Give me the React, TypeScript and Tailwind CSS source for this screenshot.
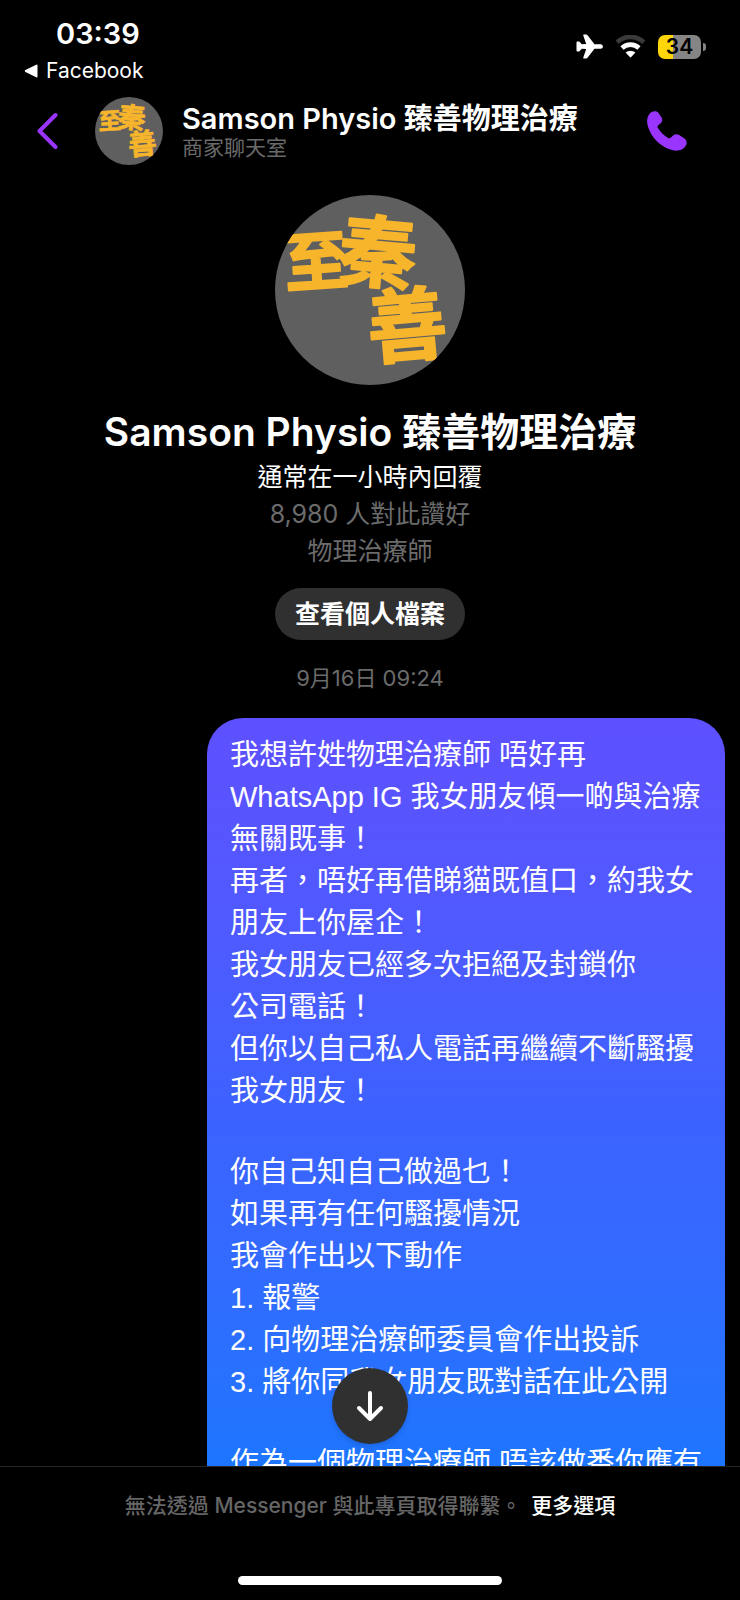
import { ReactNode } from 'react';

const PAGE_NAME = 'Samson Physio 臻善物理治療';

const MESSAGE = [
    [
        '我想許姓物理治療師 唔好再',
        'WhatsApp IG 我女朋友傾一啲與治療',
        '無關既事！',
        '再者，唔好再借睇貓既值口，約我女',
        '朋友上你屋企！',
        '我女朋友已經多次拒絕及封鎖你',
        '公司電話！',
        '但你以自己私人電話再繼續不斷騷擾',
        '我女朋友！',
    ],
    [
        '你自己知自己做過乜！',
        '如果再有任何騷擾情況',
        '我會作出以下動作',
        '1. 報警',
        '2. 向物理治療師委員會作出投訴',
        '3. 將你同我女朋友既對話在此公開',
    ],
    ['作為一個物理治療師 唔該做番你應有'],
];

function Avatar({ className }: { className: string }) {
    return (
        <svg viewBox="0 0 190 190" className={`shrink-0 rounded-full bg-[#5f5f5f] ${className}`} role="img" aria-label="臻善">
            <g fill="#f7b52c" stroke="#f7b52c" strokeWidth="2" strokeLinejoin="round" fontWeight="700">
                <text x="9" y="90" fontSize="64" transform="rotate(-4 40 66)">至</text>
                <text x="64" y="86" fontSize="78" transform="rotate(5 102 56)">秦</text>
                <text x="92" y="160" fontSize="80" transform="rotate(-5 132 130)">善</text>
            </g>
        </svg>
    );
}

function StatusBar() {
    return (
        <div className="flex items-start justify-between pt-4 pl-6 pr-[34px]">
            <div>
                <p className="pl-8 text-[29px] leading-9 font-semibold">03:39</p>
                <a href="#facebook" className="flex items-center gap-2 text-[21px] leading-[38px]">
                    <svg viewBox="0 0 14 14" className="h-3.5 w-3.5" fill="white" aria-hidden="true">
                        <path d="M12.2.8 1.4 6.1a1 1 0 0 0 0 1.8l10.8 5.3a.9.9 0 0 0 1.3-.8V1.6a.9.9 0 0 0-1.3-.8Z" />
                    </svg>
                    Facebook
                </a>
            </div>
            <div className="flex items-center gap-3 pt-[18px]">
                <svg viewBox="0 0 27 25" className="h-[25px] w-[27px]" fill="white" aria-hidden="true">
                    <path d="M24.6 10.2c1.300 0 2.300 1 2.300 2.300s-1 2.300-2.300 2.300h-6.100l-7 8.900c-.3.500-.7.800-1.200.8H8c-.7 0-.9-.5-.7-1.100l2.900-8.500-4.400-.2-2.100 2.400c-.3.400-.6.500-1 .5H1.300c-.5 0-.8-.3-.8-.8V8.200c0-.5.300-.8.800-.8h1.400c.4 0 .7.100 1 .5l2.100 2.400 4.400-.2-2.900-8.500C7.100 1 7.300.5 8 .5h2.300c.5 0 .9.300 1.200.8l7 8.900h6.100Z" />
                </svg>
                <svg viewBox="0 0 31 23" className="h-[23px] w-[31px]" fill="none" aria-hidden="true">
                    <path d="M2.200 7.200a19.500 19.500 0 0 1 26.600 0" stroke="#3a3a3a" strokeWidth="4.600" />
                    <path d="M7 13a12.500 12.500 0 0 1 17 0" stroke="white" strokeWidth="4.600" />
                    <path d="M10.600 17.600a7.300 7.300 0 0 1 9.800 0l-4.200 4.500a1 1 0 0 1-1.400 0Z" fill="white" />
                </svg>
                <div className="flex items-center gap-0.5">
                    <div className="flex h-6 w-[43px] items-center justify-center rounded-[7px] bg-linear-to-r from-[#ffd60a] from-34% to-[#858585] to-34% text-[21px] leading-6 font-semibold text-black">
                        34
                    </div>
                    <div className="h-2 w-[3px] rounded-r-full bg-[#858585]" />
                </div>
            </div>
        </div>
    );
}

function ChatHeader() {
    return (
        <header className="flex items-center pt-[7px] pb-3 pl-9 pr-[52px]">
            <button type="button" aria-label="返回" className="mr-[37px]">
                <svg viewBox="0 0 22 38" className="h-[38px] w-[22px]" fill="none" stroke="#9a35ff" strokeWidth="4" strokeLinecap="round" strokeLinejoin="round">
                    <path d="M19.500 3 3.500 19l16 16" />
                </svg>
            </button>
            <Avatar className="h-[68px] w-[68px]" />
            <div className="ml-[19px] min-w-0 flex-1">
                <h2 className="truncate text-[29px] leading-[34px] font-semibold">{PAGE_NAME}</h2>
                <p className="text-[21px] leading-6 text-[#6b6b6b]">商家聊天室</p>
            </div>
            <button type="button" aria-label="通話">
                <svg viewBox="0 0 42 42" className="h-[42px] w-[42px]" fill="#9a35ff">
                    <path d="M3.200 4.200C5.200 1.300 9.600.2 12.200 2.600l3.200 4.600c1.400 2.100 1 4.400-.8 6l-2.600 2.200c-.7.700-.7 1.400-.2 2.300 2.500 4.300 5.900 7.600 10.200 10.200 1 .6 1.900.5 2.600-.2l2.600-2.300c1.700-1.500 4-1.700 6-.4l5.300 3.500c2.800 2.200 2.600 5.800.6 8.300-3.300 4.200-9.600 4.800-15.500 2.500C13.100 35.200 5.400 27.400 2 16.700.6 12.100.7 7.700 3.200 4.200Z" />
                </svg>
            </button>
        </header>
    );
}

function MutedLine({ children }: { children: ReactNode }) {
    return <p className="text-[25px] leading-[37px] text-[#6b6b6b]">{children}</p>;
}

function ProfileIntro() {
    return (
        <section className="flex flex-col items-center pt-[18px] text-center">
            <Avatar className="h-[190px] w-[190px]" />
            <h1 className="mt-5 text-[39px] leading-[54px] font-semibold">{PAGE_NAME}</h1>
            <p className="text-[25px] leading-[37px]">通常在一小時內回覆</p>
            <MutedLine>8,980 人對此讚好</MutedLine>
            <MutedLine>物理治療師</MutedLine>
            <button type="button" className="mt-[18px] rounded-full bg-[#303030] px-5 text-[25px] leading-[52px] font-semibold">
                查看個人檔案
            </button>
        </section>
    );
}

export default function App() {
    return (
        <div className="flex h-screen flex-col bg-black font-['Inter','Noto_Sans_CJK_TC',sans-serif] text-white" lang="zh-Hant">
            <StatusBar />
            <ChatHeader />

            <main className="relative min-h-0 flex-1">
                <div className="h-full overflow-hidden">
                    <ProfileIntro />
                    <p className="mt-6 text-center text-[22px] leading-7 text-[#6b6b6b]">9月16日 09:24</p>
                    <div className="mt-[26px] mr-[15px] ml-auto w-[70%] space-y-[39px] rounded-[36px] bg-linear-to-b from-[#5e50ff] via-[#3c62ff] to-[#1478ff] px-[23px] pt-4 pb-8 font-['Liberation_Sans','Noto_Sans_CJK_TC',sans-serif] text-[29px] leading-[42px]">
                        {MESSAGE.map((lines, i) => (
                            <p key={i} className="whitespace-pre">{lines.join('\n')}</p>
                        ))}
                    </div>
                </div>

                {/* Jump to latest */}
                <button
                    type="button"
                    aria-label="捲動到最新訊息"
                    className="absolute bottom-[22px] left-1/2 flex h-[76px] w-[76px] -translate-x-1/2 items-center justify-center rounded-full bg-[#303030] shadow-md"
                >
                    <svg viewBox="0 0 30 34" className="h-[34px] w-[30px]" fill="none" stroke="white" strokeWidth="4" strokeLinecap="round" strokeLinejoin="round">
                        <path d="M15 4v26M4 19l11 11 11-11" />
                    </svg>
                </button>
            </main>

            <footer className="border-t border-[#262626] pt-[23px] pb-[15px] text-center">
                <p className="text-[21px] leading-8 font-medium text-[#666666]">
                    無法透過 Messenger 與此專頁取得聯繫。{' '}
                    <a href="#more" className="ml-1 text-white">更多選項</a>
                </p>
                <div className="mx-auto mt-[54px] h-[9px] w-[264px] rounded-full bg-white" />
            </footer>
        </div>
    );
}
